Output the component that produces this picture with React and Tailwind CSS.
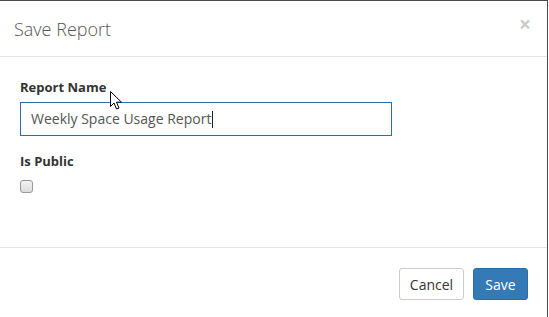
import React from "react";

export default function App() {
  const font = { fontFamily: '"Open Sans", "Noto Sans", sans-serif' };
  return (
    <div className="w-[549px] h-[317px] bg-white relative overflow-hidden" style={font}>
      <div className="w-[548px] h-[317px] border-t border-r border-[#4a4a4a] bg-white flex flex-col">
        {/* Header */}
        <div className="h-[56px] shrink-0 border-b border-[#e5e5e5] flex items-center justify-between pl-[14px] pr-[16px]">
          <h4 className="text-[18px] font-light text-[#555] leading-none" style={font}>Save Report</h4>
          <span className="text-[21px] font-bold text-[#000] opacity-20 leading-none -mt-[9px]">×</span>
        </div>
        {/* Body */}
        <div className="h-[191px] shrink-0 px-5 pt-5 border-b border-[#e5e5e5]">
          <label className="block text-[13px] font-bold text-[#333] leading-[20px] mb-[5px]">Report Name</label>
          <div className="w-[372px] h-[34px] border border-[#2e6da4] flex items-center pl-[10px]">
            <span className="text-[14px] text-[#555] leading-none">Weekly Space Usage Report</span>
            <span className="w-px h-[17px] bg-[#222] ml-px"></span>
          </div>
          <label className="block mt-[15px] text-[13px] font-bold text-[#333] leading-[20px]">Is Public</label>
          <div className="mt-[9px] w-[13px] h-[13px] rounded-[3px] border border-[#999] bg-gradient-to-b from-[#f2f2f2] to-[#dcdcdc]"></div>
        </div>
        {/* Footer */}
        <div className="flex-1 flex justify-end items-start pt-5 pr-[19px] gap-[9px]">
          <button className="h-[32px] w-[65px] border border-[#ccc] rounded-[3px] bg-white text-[14px] text-[#333]">Cancel</button>
          <button className="h-[32px] w-[55px] border border-[#2e6da4] rounded-[3px] bg-[#337ab7] text-[14px] text-white">Save</button>
        </div>
      </div>
      {/* Mouse cursor */}
      <svg className="absolute left-[110px] top-[91px]" width="14" height="20" viewBox="0 0 14 20">
        <path d="M0.5 0.5 L0.5 15.5 L4 12 L6.5 18 L9 17 L6.5 11.2 L11.5 11.2 Z" fill="#fff" stroke="#000" strokeWidth="1" strokeLinejoin="miter" />
      </svg>
    </div>
  );
}
